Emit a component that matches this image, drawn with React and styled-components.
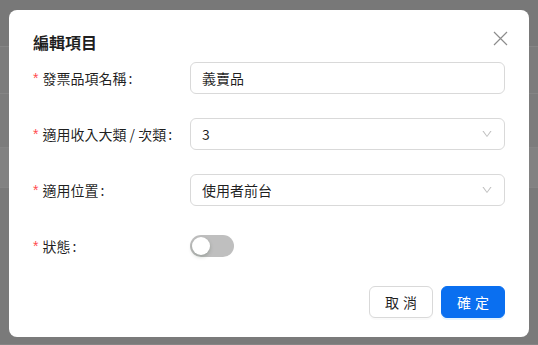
import { useState } from "react"
import styled, { createGlobalStyle } from "styled-components"

const GlobalStyle = createGlobalStyle`
    html, body {
        margin: 0;
        padding: 0;
        background-color: #7b7b7b;
        font-family: "Noto Sans CJK TC", "Noto Sans", "Liberation Sans", sans-serif;
    }
    * {
        box-sizing: border-box;
    }
`

const Page = styled.div`
    width: 538px;
    height: 345px;
    overflow: hidden;
    position: relative;
    display: flex;
    flex-direction: column;
`

const BgRow = styled.div`
    height: ${props => props.h}px;
    background-color: ${props => props.bg};
    border-bottom: 1px solid #858585;
`

const Dialog = styled.div`
    position: absolute;
    top: 10px;
    left: 9px;
    width: 520px;
    background-color: #ffffff;
    border-radius: 8px;
    padding: 20px 24px 19px 24px;
`

const Title = styled.div`
    font-size: 16px;
    line-height: 24px;
    font-weight: 600;
    color: rgba(0, 0, 0, 0.88);
    margin-bottom: 8px;
`

const CloseButton = styled.button`
    position: absolute;
    top: 17px;
    right: 18px;
    width: 22px;
    height: 22px;
    border: none;
    background: none;
    padding: 0;
    display: flex;
    justify-content: center;
    align-items: center;
    color: rgba(0, 0, 0, 0.45);
    cursor: pointer;
`

const FormRow = styled.div`
    display: flex;
    align-items: center;
    height: 32px;
    margin-bottom: 24px;
`

const Label = styled.label`
    width: 157px;
    flex-shrink: 0;
    display: flex;
    align-items: center;
    font-size: 14px;
    color: rgba(0, 0, 0, 0.88);
    white-space: nowrap;
    .star {
        color: #ff4d4f;
        margin-right: 4px;
        font-family: "Liberation Sans", sans-serif;
        font-size: 14px;
    }
    .colon {
        margin: 0 8px 0 2px;
    }
`

const Field = styled.div`
    flex: 1;
    height: 32px;
    border: 1px solid #d9d9d9;
    border-radius: 6px;
    padding: 0 11px;
    display: flex;
    align-items: center;
    justify-content: space-between;
    font-size: 14px;
    color: rgba(0, 0, 0, 0.88);
    input {
        border: none;
        outline: none;
        width: 100%;
        font: inherit;
        color: inherit;
        padding: 0;
        background: none;
    }
`

const Chevron = styled.span`
    display: flex;
    color: rgba(0, 0, 0, 0.25);
`

const Switch = styled.button`
    width: 44px;
    height: 22px;
    border-radius: 11px;
    border: none;
    padding: 0;
    background-color: ${props => props.on ? "#0a6ff0" : "#bfbfbf"};
    position: relative;
    cursor: pointer;
    &::after {
        content: "";
        position: absolute;
        top: 2px;
        left: ${props => props.on ? "24px" : "2px"};
        width: 18px;
        height: 18px;
        border-radius: 50%;
        background-color: #ffffff;
        box-shadow: 0 2px 4px rgba(0, 35, 11, 0.2);
    }
`

const Footer = styled.div`
    display: flex;
    justify-content: flex-end;
    gap: 8px;
`

const Button = styled.button`
    width: 64px;
    height: 32px;
    border-radius: 6px;
    font-family: inherit;
    font-size: 14px;
    letter-spacing: 4px;
    text-indent: 4px;
    cursor: pointer;
    border: 1px solid ${props => props.primary ? "#0a6ff0" : "#d9d9d9"};
    background-color: ${props => props.primary ? "#0a6ff0" : "#ffffff"};
    color: ${props => props.primary ? "#ffffff" : "rgba(0, 0, 0, 0.88)"};
    box-shadow: ${props => props.primary ? "0 2px 0 rgba(5, 145, 255, 0.1)" : "0 2px 0 rgba(0, 0, 0, 0.02)"};
`

function Down() {
    return (
        <svg width="12" height="12" viewBox="0 0 1024 1024" fill="currentColor">
            <path d="M884 256h-75c-5.1 0-9.9 2.5-12.9 6.6L512 654.2 227.9 262.6c-3-4.1-7.8-6.6-12.9-6.6h-75c-6.5 0-10.3 7.4-6.5 12.7l352.6 486.1c12.8 17.6 39 17.6 51.7 0l352.6-486.1c3.9-5.3.1-12.7-6.4-12.7z" />
        </svg>
    )
}

export default function App() {
    const [name, setName] = useState("義賣品")
    const [status, setStatus] = useState(false)

    return (
        <>
            <GlobalStyle />
            <Page>
                <BgRow h={48} bg="#787878" />
                <BgRow h={48} bg="#7c7c7c" />
                <BgRow h={55} bg="#7c7c7c" />
                <BgRow h={40} bg="#828282" />
                <BgRow h={160} bg="#7a7a7a" />

                <Dialog>
                    <CloseButton>
                        <svg width="15" height="15" viewBox="0 0 15 15" stroke="currentColor" strokeWidth="1.2" fill="none">
                            <path d="M1 1L14 14M14 1L1 14" />
                        </svg>
                    </CloseButton>
                    <Title>編輯項目</Title>

                    <FormRow>
                        <Label><span className="star">*</span>發票品項名稱<span className="colon">:</span></Label>
                        <Field>
                            <input value={name} onChange={(e) => setName(e.target.value)} />
                        </Field>
                    </FormRow>
                    <FormRow>
                        <Label><span className="star">*</span>適用收入大類 / 次類<span className="colon">:</span></Label>
                        <Field>
                            <span>3</span>
                            <Chevron><Down /></Chevron>
                        </Field>
                    </FormRow>
                    <FormRow>
                        <Label><span className="star">*</span>適用位置<span className="colon">:</span></Label>
                        <Field>
                            <span>使用者前台</span>
                            <Chevron><Down /></Chevron>
                        </Field>
                    </FormRow>
                    <FormRow>
                        <Label><span className="star">*</span>狀態<span className="colon">:</span></Label>
                        <Switch on={status} onClick={() => setStatus(!status)} />
                    </FormRow>

                    <Footer>
                        <Button>取消</Button>
                        <Button primary>確定</Button>
                    </Footer>
                </Dialog>
            </Page>
        </>
    )
}
